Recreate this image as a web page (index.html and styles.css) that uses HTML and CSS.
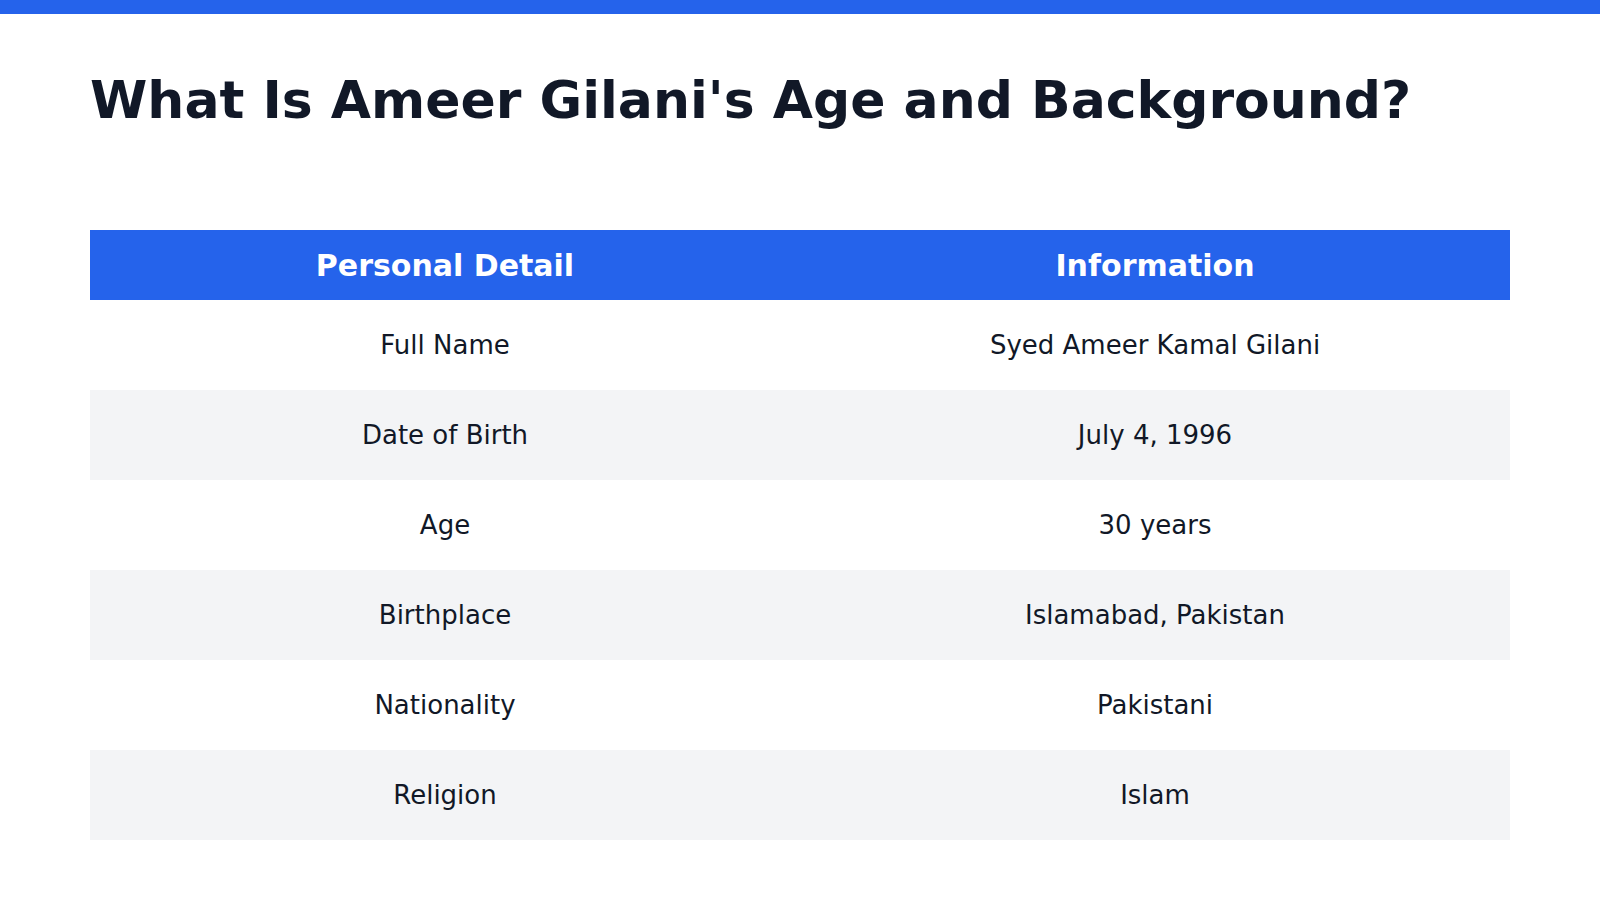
FILE: index.html
```html
<!DOCTYPE html>
<html>
<head>
<meta charset="utf-8">
<link rel="stylesheet" href="styles.css">
</head>
<body>
<div class="topbar"></div>
<main class="content">
  <h1 class="title">What Is Ameer Gilani's Age and Background?</h1>
  <table class="info">
    <thead>
      <tr><th>Personal Detail</th><th>Information</th></tr>
    </thead>
    <tbody>
      <tr><td>Full Name</td><td>Syed Ameer Kamal Gilani</td></tr>
      <tr><td>Date of Birth</td><td>July 4, 1996</td></tr>
      <tr><td>Age</td><td>30 years</td></tr>
      <tr><td>Birthplace</td><td>Islamabad, Pakistan</td></tr>
      <tr><td>Nationality</td><td>Pakistani</td></tr>
      <tr><td>Religion</td><td>Islam</td></tr>
    </tbody>
  </table>
</main>
</body>
</html>
```

FILE: styles.css
```css
html, body {
  margin: 0;
  padding: 0;
  background: #ffffff;
  font-family: "DejaVu Sans", sans-serif;
  color: #111827;
}
.topbar {
  height: 14px;
  background: #2563eb;
}
.content {
  padding: 0 90px;
}
.title {
  margin: 0;
  padding-top: 42px;
  font-size: 52px;
  line-height: 88px;
  font-weight: 700;
  color: #111827;
}
.info {
  margin-top: 86px;
  width: 100%;
  border-collapse: collapse;
  table-layout: fixed;
}
.info th {
  background: #2563eb;
  color: #ffffff;
  font-size: 30px;
  font-weight: 700;
  height: 70px;
  padding: 0;
  text-align: center;
}
.info td {
  height: 90px;
  padding: 0;
  text-align: center;
  font-size: 26px;
  color: #111827;
}
.info tbody tr:nth-child(even) td {
  background: #f3f4f6;
}
```
